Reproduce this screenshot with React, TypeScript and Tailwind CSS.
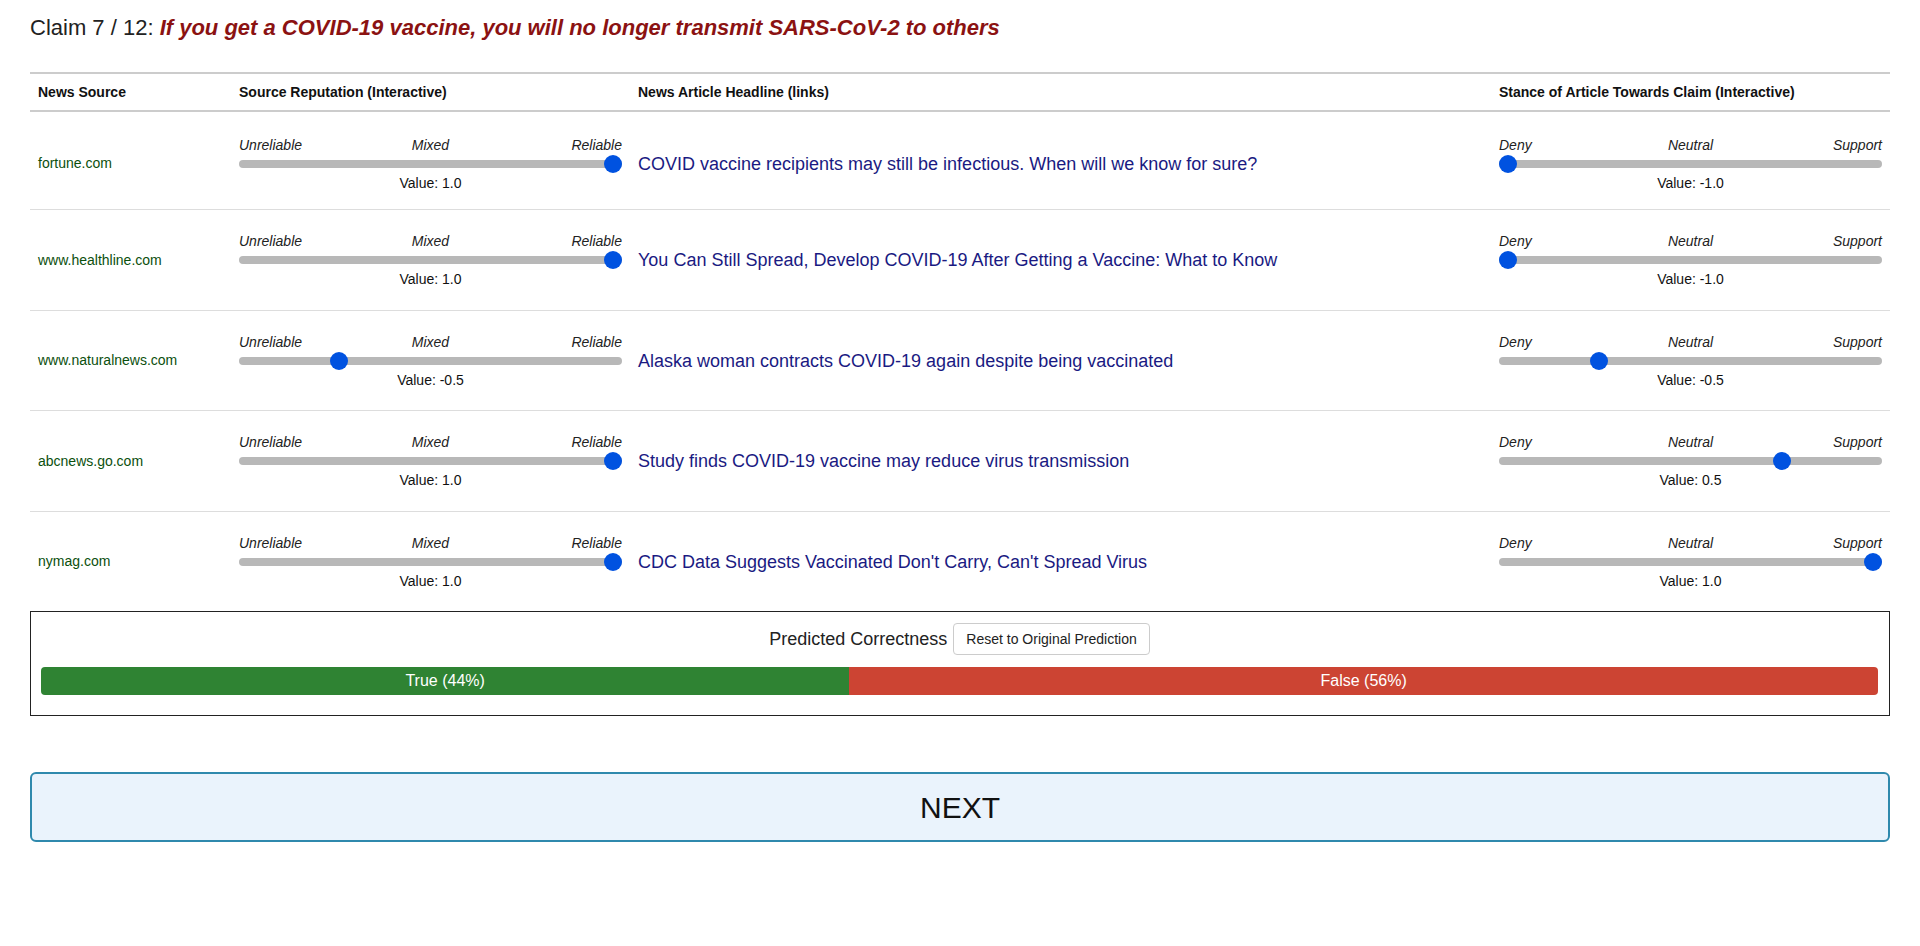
import { useState } from "react";

interface Article {
    source: string;
    reputation: number;
    headline: string;
    stance: number;
}

const initialArticles: Article[] = [
    {
        source: "fortune.com",
        reputation: 1,
        headline: "COVID vaccine recipients may still be infectious. When will we know for sure?",
        stance: -1,
    },
    {
        source: "www.healthline.com",
        reputation: 1,
        headline: "You Can Still Spread, Develop COVID-19 After Getting a Vaccine: What to Know",
        stance: -1,
    },
    {
        source: "www.naturalnews.com",
        reputation: -0.5,
        headline: "Alaska woman contracts COVID-19 again despite being vaccinated",
        stance: -0.5,
    },
    {
        source: "abcnews.go.com",
        reputation: 1,
        headline: "Study finds COVID-19 vaccine may reduce virus transmission",
        stance: 0.5,
    },
    {
        source: "nymag.com",
        reputation: 1,
        headline: "CDC Data Suggests Vaccinated Don't Carry, Can't Spread Virus",
        stance: 1,
    },
];

// per-row height classes, tuned so the row rules land where the screenshot has them
const rowClasses = [
    "h-[98px] pt-[6px] border-b border-[#dddddd]",
    "h-[101px] border-b border-[#dddddd]",
    "h-[100px] border-b border-[#dddddd]",
    "h-[101px] border-b border-[#dddddd]",
    "h-[99px]",
];

const Slider = ({
    value,
    labels,
    onChange,
}: {
    value: number;
    labels: [string, string, string];
    onChange: (v: number) => void;
}) => {
    const pct = (value + 1) / 2;

    const handleClick = (e: React.MouseEvent<HTMLDivElement>) => {
        const rect = e.currentTarget.getBoundingClientRect();
        const ratio = Math.min(Math.max((e.clientX - rect.left - 9) / (rect.width - 18), 0), 1);
        onChange(Math.round((ratio * 2 - 1) * 2) / 2);
    };

    return (
        <div className="flex flex-col w-full">
            <div className="grid grid-cols-3 text-[14px] leading-[16px] italic text-[#222]">
                <span className="text-left">{labels[0]}</span>
                <span className="text-center">{labels[1]}</span>
                <span className="text-right">{labels[2]}</span>
            </div>
            <div className="relative h-[22px] flex items-center cursor-pointer" onClick={handleClick}>
                <div className="h-[8px] w-full rounded-full bg-[#b8b8b8]" />
                <div
                    className="absolute top-[2px] w-[18px] h-[18px] rounded-full bg-[#0052e0]"
                    style={{ left: `calc(${pct} * (100% - 18px))` }}
                />
            </div>
            <div className="text-center text-[14px] leading-[16px] text-[#111]">
                Value: {value.toFixed(1)}
            </div>
        </div>
    );
};

export default function App() {
    const [articles, setArticles] = useState<Article[]>(initialArticles);

    const update = (index: number, key: "reputation" | "stance", v: number) => {
        setArticles((prev) => prev.map((a, i) => (i === index ? { ...a, [key]: v } : a)));
    };

    return (
        <div className="min-h-screen bg-white px-[30px] font-['Liberation_Sans',Arial,sans-serif] text-[#111]">
            <div className="pt-[15px] text-[22px] leading-[26px] text-[#222]">
                Claim 7 / 12:{" "}
                <span className="font-bold italic text-[#8b1212]">
                    If you get a COVID-19 vaccine, you will no longer transmit SARS-CoV-2 to others
                </span>
            </div>

            <div className="mt-[31px]">
                <div className="grid grid-cols-[201px_399px_861px_399px] border-t-2 border-b-2 border-[#cccccc] text-[14px] leading-[20px] font-bold">
                    <div className="px-2 py-2">News Source</div>
                    <div className="px-2 py-2">Source Reputation (Interactive)</div>
                    <div className="px-2 py-2">News Article Headline (links)</div>
                    <div className="px-2 py-2">Stance of Article Towards Claim (Interactive)</div>
                </div>

                {articles.map((article, index) => (
                    <div
                        key={article.source}
                        className={`grid grid-cols-[201px_399px_861px_399px] ${rowClasses[index]}`}
                    >
                        <div className="px-2 flex items-center text-[14px] text-[#0b4f0d]">
                            {article.source}
                        </div>
                        <div className="px-2 flex items-center">
                            <Slider
                                value={article.reputation}
                                labels={["Unreliable", "Mixed", "Reliable"]}
                                onChange={(v) => update(index, "reputation", v)}
                            />
                        </div>
                        <div className="px-2 flex items-center">
                            <a href="#" className="text-[18px] leading-[22px] text-[#1a1a82]">
                                {article.headline}
                            </a>
                        </div>
                        <div className="px-2 flex items-center">
                            <Slider
                                value={article.stance}
                                labels={["Deny", "Neutral", "Support"]}
                                onChange={(v) => update(index, "stance", v)}
                            />
                        </div>
                    </div>
                ))}
            </div>

            <div className="border border-[#222] pt-[11px] pb-[20px] pl-[10px] pr-[11px]">
                <div className="flex items-center justify-center gap-[6px]">
                    <span className="text-[18px] leading-[32px] text-[#222]">Predicted Correctness</span>
                    <button
                        onClick={() => setArticles(initialArticles)}
                        className="h-[32px] px-[12px] border border-[#cccccc] rounded-[4px] bg-white text-[14px] text-[#222]"
                    >
                        Reset to Original Prediction
                    </button>
                </div>
                <div className="mt-[12px] h-[28px] flex rounded-[4px] overflow-hidden text-[16px] text-white">
                    <div className="w-[44%] bg-[#2f8333] flex items-center justify-center">True (44%)</div>
                    <div className="w-[56%] bg-[#cc4433] flex items-center justify-center">False (56%)</div>
                </div>
            </div>

            <button className="mt-[56px] w-full h-[70px] rounded-[6px] border-2 border-[#2f89ad] bg-[#eaf3fc] text-[30px] text-[#111]">
                NEXT
            </button>
        </div>
    );
}
